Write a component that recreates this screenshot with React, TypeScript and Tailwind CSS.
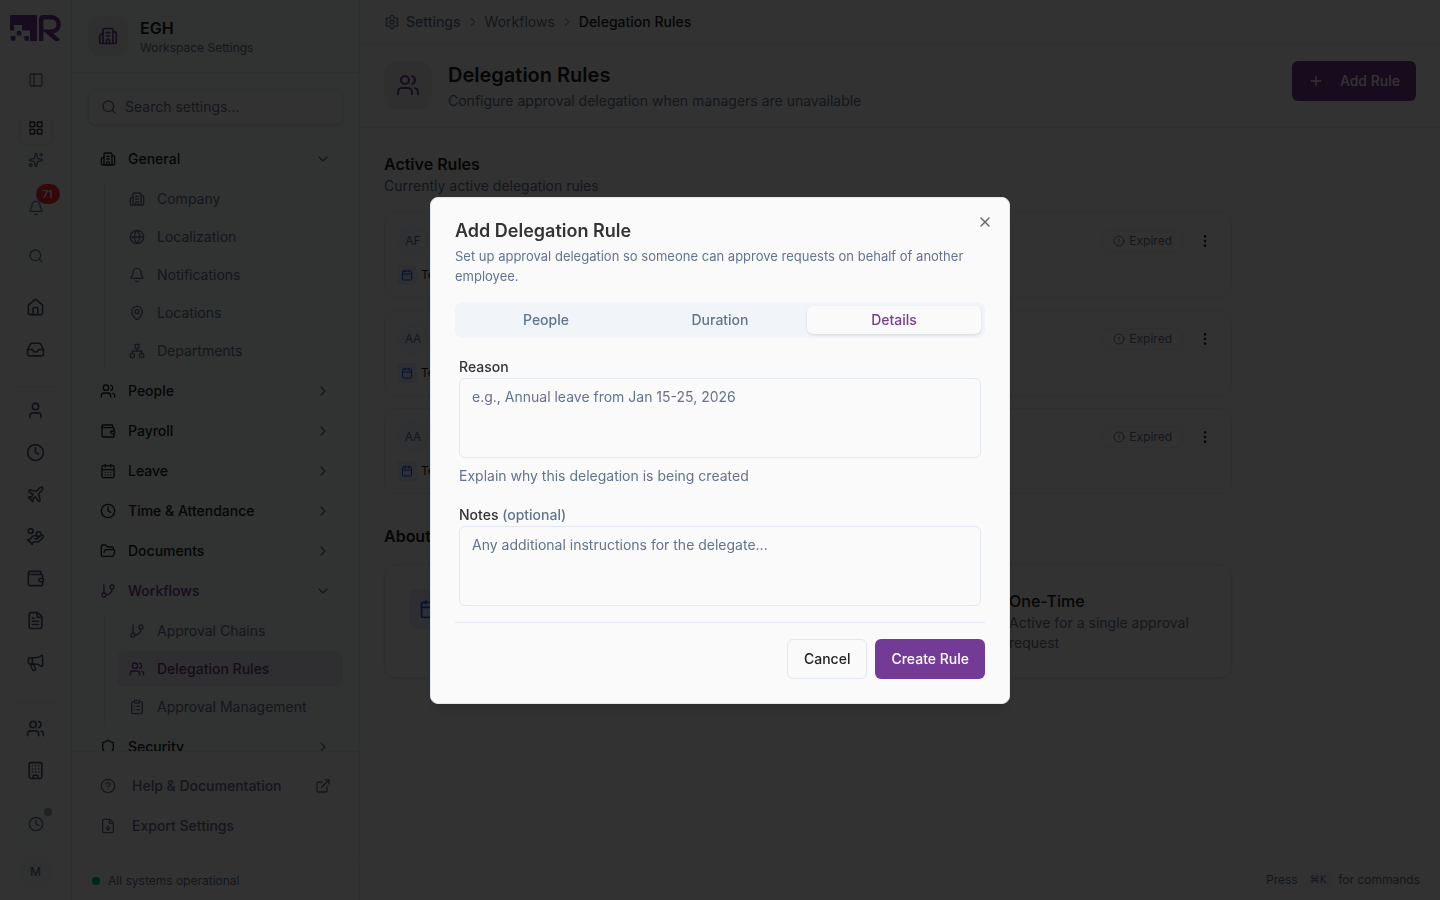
import {
  Bell,
  Building,
  Building2,
  Calendar,
  CalendarDays,
  ChevronDown,
  ChevronRight,
  CircleAlert,
  CircleHelp,
  ClipboardList,
  Clock,
  EllipsisVertical,
  ExternalLink,
  FileDown,
  FileText,
  FolderOpen,
  GitBranch,
  Globe,
  HandCoins,
  House,
  Inbox,
  LayoutGrid,
  MapPin,
  Megaphone,
  Network,
  PanelLeft,
  Plane,
  Plus,
  Search,
  Settings,
  Shield,
  Sparkles,
  User,
  Users,
  Wallet,
  X,
} from "lucide-react";

const railTop = [
  { icon: House, label: "Home" },
  { icon: Inbox, label: "Inbox" },
];

const railMiddle = [
  { icon: User, label: "Profile" },
  { icon: Clock, label: "Time" },
  { icon: Plane, label: "Leave" },
  { icon: HandCoins, label: "Expenses" },
  { icon: Wallet, label: "Payroll" },
  { icon: FileText, label: "Documents" },
  { icon: Megaphone, label: "Announcements" },
];

const railBottom = [
  { icon: Users, label: "People" },
  { icon: Building, label: "Company" },
];

const sections = [
  {
    name: "General",
    icon: Building2,
    items: [
      { name: "Company", icon: Building2 },
      { name: "Localization", icon: Globe },
      { name: "Notifications", icon: Bell },
      { name: "Locations", icon: MapPin },
      { name: "Departments", icon: Network },
    ],
  },
  { name: "People", icon: Users },
  { name: "Payroll", icon: Wallet },
  { name: "Leave", icon: CalendarDays },
  { name: "Time & Attendance", icon: Clock },
  { name: "Documents", icon: FolderOpen },
  {
    name: "Workflows",
    icon: GitBranch,
    active: true,
    items: [
      { name: "Approval Chains", icon: GitBranch },
      { name: "Delegation Rules", icon: Users, active: true },
      { name: "Approval Management", icon: ClipboardList },
    ],
  },
  { name: "Security", icon: Shield },
];

const rules = [
  { id: 1, initials: "AF" },
  { id: 2, initials: "AA" },
  { id: 3, initials: "AA" },
];

const ruleTypes = [
  { name: "Temporary", text: "Active for a set date range", icon: Calendar },
  { name: "Permanent", text: "Active until it is removed", icon: Users },
  {
    name: "One-Time",
    text: "Active for a single approval request",
    icon: Clock,
  },
];

function Logo() {
  return (
    <svg
      viewBox="0 0 52 26"
      className="h-[26px] w-[52px] shrink-0"
      fill="#733b96"
      aria-hidden="true"
    >
      <path d="M1 0H26A1 1 0 0 1 27 1V26H20V15.5H12V10H4V15.5H0V1A1 1 0 0 1 1 0Z" />
      <rect x="6.8" y="16" width="4.6" height="4.6" rx="1" />
      <rect x="0.8" y="21" width="4.6" height="4.8" rx="1" />
      <rect x="14.4" y="21" width="4.6" height="4.8" rx="1" />
      <path
        d="M31.2 26V4.4Q31.2 2.2 33.4 2.2H41.5A7.2 7.2 0 0 1 41.5 16.6H37.5L48.5 26"
        fill="none"
        stroke="#733b96"
        strokeWidth="4.4"
      />
    </svg>
  );
}

function RailButton({ icon: Icon, label }: any) {
  return (
    <button
      type="button"
      aria-label={label}
      className="flex h-[38px] w-9 items-center justify-center text-slate-600"
    >
      <Icon size={19} strokeWidth={2} />
    </button>
  );
}

function Rail() {
  return (
    <nav className="flex w-[72px] shrink-0 flex-col items-center border-r border-slate-200 pt-[15px]">
      <Logo />
      <button
        type="button"
        aria-label="Toggle sidebar"
        className="mt-6 flex h-[30px] w-8 items-center justify-center text-slate-500"
      >
        <PanelLeft size={16} />
      </button>
      <div className="mt-[15px] flex w-9 flex-col items-center rounded-xl bg-[#f3f9f7] py-0.5">
        <button
          type="button"
          aria-label="Apps"
          className="flex size-8 items-center justify-center rounded-lg bg-[#fafafa] text-[#222222] shadow"
        >
          <LayoutGrid size={16} />
        </button>
        <button
          type="button"
          aria-label="Assistant"
          className="flex size-8 items-center justify-center text-slate-500"
        >
          <Sparkles size={16} />
        </button>
      </div>
      <button
        type="button"
        aria-label="Notifications"
        className="relative mt-2.5 flex h-10 w-9 items-center justify-center rounded-xl bg-[#f3f9f7] text-slate-500"
      >
        <Bell size={16} />
        <span className="absolute -top-1 -right-1.5 flex h-5 w-6 items-center justify-center rounded-full bg-red-500 text-[10px] font-semibold text-white">
          71
        </span>
      </button>
      <button
        type="button"
        aria-label="Search"
        className="mt-2 flex h-10 w-9 items-center justify-center rounded-xl bg-[#f3f9f7] text-slate-500"
      >
        <Search size={16} />
      </button>
      <div className="mt-3 flex flex-col gap-1">
        {railTop.map((item) => (
          <RailButton key={item.label} {...item} />
        ))}
      </div>
      <div className="mt-[18px] mb-1 h-px w-10 bg-slate-200" />
      <div className="flex flex-col gap-1">
        {railMiddle.map((item) => (
          <RailButton key={item.label} {...item} />
        ))}
      </div>
      <div className="mt-[21px] mb-1.5 h-px w-10 bg-slate-200" />
      <div className="flex flex-col gap-1">
        {railBottom.map((item) => (
          <RailButton key={item.label} {...item} />
        ))}
      </div>
      <div className="mt-auto flex flex-col items-center gap-3 pb-3">
        <button
          type="button"
          aria-label="Timer"
          className="relative flex h-10 w-9 items-center justify-center rounded-xl bg-[#f3f9f7] text-slate-500"
        >
          <Clock size={16} />
          <span className="absolute top-1 right-0.5 size-2 rounded-full bg-slate-400" />
        </button>
        <button
          type="button"
          aria-label="Account"
          className="flex size-8 items-center justify-center rounded-full bg-slate-100 text-xs font-medium text-slate-500"
        >
          M
        </button>
      </div>
    </nav>
  );
}

function Sidebar() {
  return (
    <aside className="flex w-72 shrink-0 flex-col border-r border-slate-200 bg-[#f3f9f7]">
      <div className="flex h-[73px] shrink-0 items-center gap-3 border-b border-slate-200 px-4">
        <div className="flex size-10 items-center justify-center rounded-xl bg-[#ece8f1] text-[#733b96]">
          <Building2 size={20} />
        </div>
        <div>
          <h2 className="text-base leading-6 font-semibold text-[#222222]">
            EGH
          </h2>
          <p className="text-xs leading-4 text-slate-500">Workspace Settings</p>
        </div>
      </div>
      <div className="flex min-h-0 flex-1 flex-col overflow-hidden px-4 pt-4">
        <label className="flex h-9 shrink-0 items-center gap-2 rounded-lg border border-slate-200 bg-[#fafafa] px-3 text-slate-500 shadow-sm">
          <Search size={16} className="shrink-0" />
          <input
            type="search"
            aria-label="Search settings"
            placeholder="Search settings..."
            className="w-full bg-transparent text-sm outline-none placeholder:text-slate-500"
          />
        </label>
        <ul className="mt-4 flex flex-col gap-1">
          {sections.map((section) => (
            <li key={section.name} className="shrink-0">
              <button
                type="button"
                className={
                  section.active
                    ? "flex h-9 w-full items-center gap-3 px-3 text-sm font-medium text-[#733b96]"
                    : "flex h-9 w-full items-center gap-3 px-3 text-sm font-medium text-[#222222]"
                }
              >
                <section.icon size={16} />
                <span className="flex-1 text-left">{section.name}</span>
                {section.items ? (
                  <ChevronDown size={16} className="text-slate-500" />
                ) : (
                  <ChevronRight size={16} className="text-slate-500" />
                )}
              </button>
              {section.items && (
                <ul className="mt-1 ml-4 flex flex-col gap-0.5 border-l border-slate-200 pl-3">
                  {section.items.map((item: any) => (
                    <li key={item.name}>
                      <a
                        href="#"
                        className={
                          item.active
                            ? "flex h-9 items-center gap-3 rounded-lg bg-[#ebe6f0] px-3 text-sm font-medium text-[#733b96]"
                            : "flex h-9 items-center gap-3 rounded-lg px-3 text-sm text-slate-500"
                        }
                      >
                        <item.icon size={16} />
                        {item.name}
                      </a>
                    </li>
                  ))}
                </ul>
              )}
            </li>
          ))}
        </ul>
      </div>
      <div className="flex shrink-0 flex-col gap-1 border-t border-slate-200 bg-[#f8f8f8] p-4 text-sm font-medium text-slate-500">
        <a href="#" className="flex h-9 items-center gap-4 px-3">
          <CircleHelp size={16} />
          <span className="flex-1">Help &amp; Documentation</span>
          <ExternalLink size={16} />
        </a>
        <button type="button" className="flex h-9 items-center gap-4 px-3">
          <FileDown size={16} />
          Export Settings
        </button>
      </div>
      <div className="flex h-10 shrink-0 items-center gap-2 border-t border-slate-100 bg-[#fafafa] px-5 text-xs text-slate-500">
        <span className="size-2 rounded-full bg-emerald-500" />
        All systems operational
      </div>
    </aside>
  );
}

function RuleCard({ initials }: { initials: string }) {
  return (
    <div className="rounded-xl border border-slate-200 p-3">
      <div className="flex h-8 items-center gap-2">
        <span className="flex size-8 items-center justify-center rounded-full bg-slate-100 text-xs text-slate-500">
          {initials}
        </span>
        <span className="ml-auto flex h-[22px] items-center gap-1 rounded-lg border border-slate-200 px-2.5 text-xs text-slate-500">
          <CircleAlert size={12} />
          Expired
        </span>
        <button
          type="button"
          aria-label="Rule actions"
          className="flex size-7 items-center justify-center text-[#222222]"
        >
          <EllipsisVertical size={16} />
        </button>
      </div>
      <div className="mt-2 flex h-5 items-center gap-1 text-xs text-[#222222]">
        <span className="flex size-5 items-center justify-center rounded bg-[#dfe8fa] text-blue-600">
          <Calendar size={12} />
        </span>
        Temporary
      </div>
    </div>
  );
}

function Content() {
  return (
    <main className="flex min-w-0 flex-1 flex-col">
      <nav
        aria-label="Breadcrumb"
        className="flex h-[45px] shrink-0 items-center gap-[5px] border-b border-slate-200 px-6 text-sm text-slate-500"
      >
        <a href="#" className="flex items-center gap-1.5 font-medium">
          <Settings size={16} />
          Settings
        </a>
        <ChevronRight size={14} className="text-slate-400" />
        <a href="#">Workflows</a>
        <ChevronRight size={14} className="text-slate-400" />
        <span className="font-medium text-[#222222]">Delegation Rules</span>
      </nav>
      <header className="flex shrink-0 items-start gap-4 border-b border-slate-200 px-6 py-4">
        <div className="flex size-12 items-center justify-center rounded-xl bg-[#ece8f1] text-[#733b96]">
          <Users size={24} />
        </div>
        <div className="flex-1">
          <h1 className="text-xl leading-7 font-semibold text-[#222222]">
            Delegation Rules
          </h1>
          <p className="mt-0.5 text-sm text-slate-500">
            Configure approval delegation when managers are unavailable
          </p>
        </div>
        <button
          type="button"
          className="flex h-10 items-center gap-4 rounded-md bg-[#733b96] px-4 text-sm font-medium text-white"
        >
          <Plus size={16} />
          Add Rule
        </button>
      </header>
      <div className="max-w-4xl flex-1 overflow-hidden p-6">
        <section>
          <h2 className="text-base leading-6 font-semibold text-[#222222]">
            Active Rules
          </h2>
          <p className="text-sm text-slate-500">
            Currently active delegation rules
          </p>
          <div className="mt-4 flex flex-col gap-3">
            {rules.map((rule) => (
              <RuleCard key={rule.id} initials={rule.initials} />
            ))}
          </div>
        </section>
        <section className="mt-[30px]">
          <h2 className="text-base leading-6 font-semibold text-[#222222]">
            About Delegation
          </h2>
          <div className="mt-4 grid grid-cols-3 gap-6 rounded-xl border border-slate-200 p-6 shadow-sm">
            {ruleTypes.map((type) => (
              <div key={type.name} className="flex items-start gap-3">
                <div className="flex size-10 shrink-0 items-center justify-center rounded-lg bg-[#dfe8fa] text-blue-600">
                  <type.icon size={20} />
                </div>
                <div>
                  <h3 className="text-base leading-6 font-medium text-[#222222]">
                    {type.name}
                  </h3>
                  <p className="text-sm text-slate-500">{type.text}</p>
                </div>
              </div>
            ))}
          </div>
        </section>
      </div>
      <footer className="flex h-10 shrink-0 items-center justify-end gap-1.5 border-t border-slate-100 px-5 pb-0.5 text-xs text-slate-500">
        Press
        <kbd className="flex h-5 items-center rounded bg-slate-100 px-1.5 font-['DejaVu_Sans',sans-serif] text-[10px]">
          ⌘K
        </kbd>
        for commands
      </footer>
    </main>
  );
}

function AddRuleDialog() {
  return (
    <div className="fixed inset-0 z-50 flex items-center justify-center bg-black/80">
      <div
        role="dialog"
        aria-modal="true"
        aria-labelledby="dialog-title"
        className="relative w-full max-w-[580px] rounded-lg border border-slate-200 bg-[#fafafa] p-6 shadow-lg"
      >
        <button
          type="button"
          aria-label="Close"
          className="absolute top-4 right-4 text-[#666666]"
        >
          <X size={16} />
        </button>
        <h2
          id="dialog-title"
          className="text-lg leading-[18px] font-semibold text-[#333333]"
        >
          Add Delegation Rule
        </h2>
        <p className="mt-1.5 text-[13px] leading-5 text-slate-500">
          Set up approval delegation so someone can approve requests on behalf
          of another employee.
        </p>
        <div
          role="tablist"
          className="mt-4 grid h-9 grid-cols-3 rounded-lg bg-slate-100 p-1 text-sm font-medium text-slate-500"
        >
          <button type="button" role="tab" aria-selected="false">
            People
          </button>
          <button type="button" role="tab" aria-selected="false">
            Duration
          </button>
          <button
            type="button"
            role="tab"
            aria-selected="true"
            className="rounded-md bg-[#fafafa] text-[#733b96] shadow"
          >
            Details
          </button>
        </div>
        <form className="mt-5">
          <div className="flex flex-col px-1">
            <label
              htmlFor="reason"
              className="mb-0.5 text-sm leading-[18px] font-medium text-[#333333]"
            >
              Reason
            </label>
            <textarea
              id="reason"
              placeholder="e.g., Annual leave from Jan 15-25, 2026"
              className="h-20 resize-none rounded-md border border-slate-200 px-3 py-2 text-sm outline-none placeholder:text-slate-500"
            />
            <p className="mt-2 text-sm text-slate-500">
              Explain why this delegation is being created
            </p>
            <label
              htmlFor="notes"
              className="mt-5 mb-0.5 text-sm leading-[18px] font-medium text-[#333333]"
            >
              Notes <span className="text-slate-500">(optional)</span>
            </label>
            <textarea
              id="notes"
              placeholder="Any additional instructions for the delegate..."
              className="h-20 resize-none rounded-md border border-slate-200 px-3 py-2 text-sm outline-none placeholder:text-slate-500"
            />
          </div>
          <div className="mt-4 flex justify-end gap-2 border-t border-slate-200 pt-4 text-sm font-medium">
            <button
              type="button"
              className="h-10 rounded-md border border-slate-200 px-4 text-[#222222]"
            >
              Cancel
            </button>
            <button
              type="button"
              className="h-10 rounded-md bg-[#733b96] px-4 text-white"
            >
              Create Rule
            </button>
          </div>
        </form>
      </div>
    </div>
  );
}

export default function App() {
  return (
    <div className="flex h-screen overflow-hidden bg-[#fafafa] font-['Inter',sans-serif]">
      <Rail />
      <Sidebar />
      <Content />
      <AddRuleDialog />
    </div>
  );
}
